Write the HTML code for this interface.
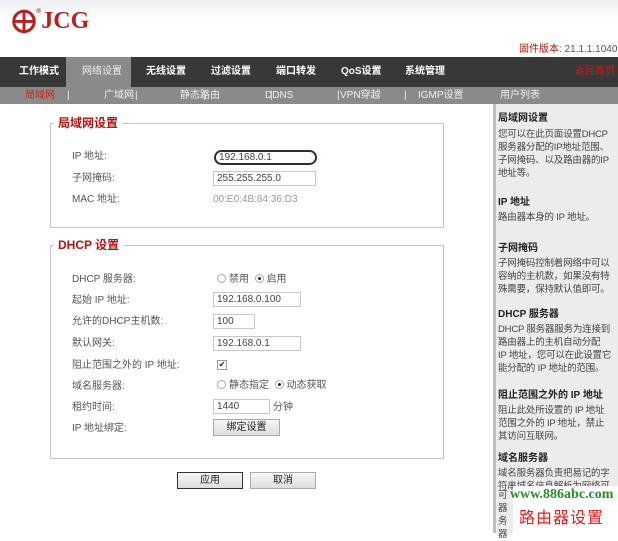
<!DOCTYPE html>
<html><head><meta charset="utf-8"><style>
*{margin:0;padding:0;box-sizing:border-box}
body{width:618px;height:533px;overflow:hidden;background:#fff;font-family:"Liberation Sans","Noto Sans CJK SC",sans-serif;font-size:10px;line-height:12px;color:#555;position:relative}
.a{position:absolute;white-space:nowrap}
.nav{left:0;top:57px;width:618px;height:30px;background:#383838}
.nt{top:66px;color:#fff;font-weight:bold;font-size:10px}
.sub{left:0;top:87px;width:618px;height:17px;background:#8a8a8a}
.st{top:90px;color:#eee;font-size:10px}
.side{left:493px;top:104px;width:125px;height:429px;background:#ececec;border-left:3px solid #bdbdbd}
.sh{left:498px;font-weight:bold;color:#222;font-size:10px;line-height:13px}
.sp{left:498px;color:#444;font-size:9.5px;line-height:13px;letter-spacing:-0.2px}
.fs{border:1px solid #c4c4c4}
.lg{color:#b01515;font-weight:bold;font-size:12px;line-height:14px;background:#fff;padding:0 4px}
.in{border:1px solid #c8c8c8;height:15px;padding:1px 3px;font-size:10px;color:#444;background:#fff}
.btn{border:1px solid #aaa;background:linear-gradient(#f6f6f6,#ddd);height:17px;text-align:center;line-height:15px;color:#222;font-size:10px}
.r{display:inline-block;width:9px;height:9px;border:1px solid #aaa;border-radius:50%;vertical-align:-1px;margin-right:3px;position:relative}
.r.on::after{content:"";position:absolute;left:2px;top:2px;width:3px;height:3px;border-radius:50%;background:#222}
</style></head><body>
<div class="a" style="left:0;top:0;width:618px;height:20px;background:linear-gradient(#eef0f3,#fff)"></div>
<div class="a" style="left:12px;top:6px;font-family:'Liberation Serif',serif;font-weight:bold;font-size:24px;line-height:30px;color:#b82020">&#10753;<span style="font-size:7px;vertical-align:top;line-height:10px">®</span>JCG</div>
<div class="a" style="left:519px;top:44px;font-size:10px;color:#b01515">固件版本<span style="color:#555">: 21.1.1.1040</span></div>
<div class="a nav"></div>
<div class="a" style="left:66px;top:57px;width:65px;height:30px;background:#8a8a8a"></div>
<div class="a nt" style="left:19px">工作模式</div>
<div class="a nt" style="left:82px;color:#eee;font-weight:normal">网络设置</div>
<div class="a nt" style="left:146px">无线设置</div>
<div class="a nt" style="left:211px">过滤设置</div>
<div class="a nt" style="left:276px">端口转发</div>
<div class="a nt" style="left:341px">QoS设置</div>
<div class="a nt" style="left:405px">系统管理</div>
<div class="a nt" style="left:575px;color:#c02020;font-weight:normal">返回首页</div>
<div class="a sub"></div>
<div class="a st" style="left:25px;color:#d02020">局域网</div>
<div class="a st" style="left:67px">|</div>
<div class="a st" style="left:104px">广域网</div>
<div class="a st" style="left:135px">|</div>
<div class="a st" style="left:180px">静态路由</div>
<div class="a st" style="left:203px">|</div>
<div class="a st" style="left:265px">DDNS</div>
<div class="a st" style="left:270px">|</div>
<div class="a st" style="left:340px">VPN穿越</div>
<div class="a st" style="left:337px">|</div>
<div class="a st" style="left:404px">|</div>
<div class="a st" style="left:418px">IGMP设置</div>
<div class="a st" style="left:500px">用户列表</div>

<div class="a fs" style="left:50px;top:123px;width:394px;height:105px"></div>
<div class="a lg" style="left:54px;top:116px">局域网设置</div>
<div class="a" style="left:72px;top:151px">IP 地址:</div>
<div class="a in" style="left:214px;top:150px;width:103px;border:2px solid #3a2a2a;border-radius:8px;height:15px;padding-top:0">192.168.0.1</div>
<div class="a" style="left:72px;top:173px">子网掩码:</div>
<div class="a in" style="left:213px;top:171px;width:103px">255.255.255.0</div>
<div class="a" style="left:72px;top:194px">MAC 地址:</div>
<div class="a" style="left:213px;top:194px;color:#999">00:E0:4B:84:36:D3</div>

<div class="a fs" style="left:50px;top:245px;width:394px;height:214px"></div>
<div class="a lg" style="left:54px;top:238px">DHCP 设置</div>
<div class="a" style="left:72px;top:274px">DHCP 服务器:</div>
<div class="a" style="left:217px;top:274px"><span class="r"></span>禁用 &nbsp;<span class="r on"></span>启用</div>
<div class="a" style="left:72px;top:295px">起始 IP 地址:</div>
<div class="a in" style="left:213px;top:292px;width:88px">192.168.0.100</div>
<div class="a" style="left:72px;top:316px">允许的DHCP主机数:</div>
<div class="a in" style="left:213px;top:314px;width:42px">100</div>
<div class="a" style="left:72px;top:338px">默认网关:</div>
<div class="a in" style="left:213px;top:336px;width:88px">192.168.0.1</div>
<div class="a" style="left:72px;top:360px">阻止范围之外的 IP 地址:</div>
<div class="a" style="left:217px;top:360px;width:10px;height:10px;border:1px solid #999;font-size:8px;line-height:8px;text-align:center;color:#222">✔</div>
<div class="a" style="left:72px;top:381px">域名服务器:</div>
<div class="a" style="left:217px;top:380px"><span class="r"></span>静态指定 &nbsp;<span class="r on"></span>动态获取</div>
<div class="a" style="left:72px;top:402px">租约时间:</div>
<div class="a in" style="left:213px;top:399px;width:57px">1440</div>
<div class="a" style="left:273px;top:402px">分钟</div>
<div class="a" style="left:72px;top:423px">IP 地址绑定:</div>
<div class="a btn" style="left:213px;top:419px;width:67px">绑定设置</div>

<div class="a btn" style="left:177px;top:472px;width:66px;border:1px solid #333">应用</div>
<div class="a btn" style="left:250px;top:472px;width:66px">取消</div>

<div class="a side"></div>
<div class="a sh" style="top:112px">局域网设置</div>
<div class="a sp" style="top:128px">您可以在此页面设置DHCP<br>服务器分配的IP地址范围、<br>子网掩码、以及路由器的IP<br>地址等。</div>
<div class="a sh" style="top:196px">IP 地址</div>
<div class="a sp" style="top:211px">路由器本身的 IP 地址。</div>
<div class="a sh" style="top:242px">子网掩码</div>
<div class="a sp" style="top:257px">子网掩码控制着网络中可以<br>容纳的主机数，如果没有特<br>殊需要，保持默认值即可。</div>
<div class="a sh" style="top:308px">DHCP 服务器</div>
<div class="a sp" style="top:323px">DHCP 服务器服务为连接到<br>路由器上的主机自动分配<br>IP 地址，您可以在此设置它<br>能分配的 IP 地址的范围。</div>
<div class="a sh" style="top:389px">阻止范围之外的 IP 地址</div>
<div class="a sp" style="top:404px">阻止此处所设置的 IP 地址<br>范围之外的 IP 地址，禁止<br>其访问互联网。</div>
<div class="a sh" style="top:452px">域名服务器</div>
<div class="a sp" style="top:467px">域名服务器负责把易记的字<br>符串域名信息解析为网络可</div>
<div class="a" style="left:513px;top:486px;width:105px;height:47px;background:#fff"></div>
<div class="a" style="left:498px;top:489px;color:#444;line-height:13px;font-size:9.5px">可<br>器<br>务<br>器</div>
<div class="a" style="left:510px;top:487px;font-family:'Liberation Serif',serif;font-weight:bold;font-size:14px;line-height:16px;color:#2a8a2a">www.886abc.com</div>
<div class="a" style="left:519px;top:509px;font-size:16px;line-height:20px;color:#e02020;letter-spacing:1px">路由器设置</div>
</body></html>
